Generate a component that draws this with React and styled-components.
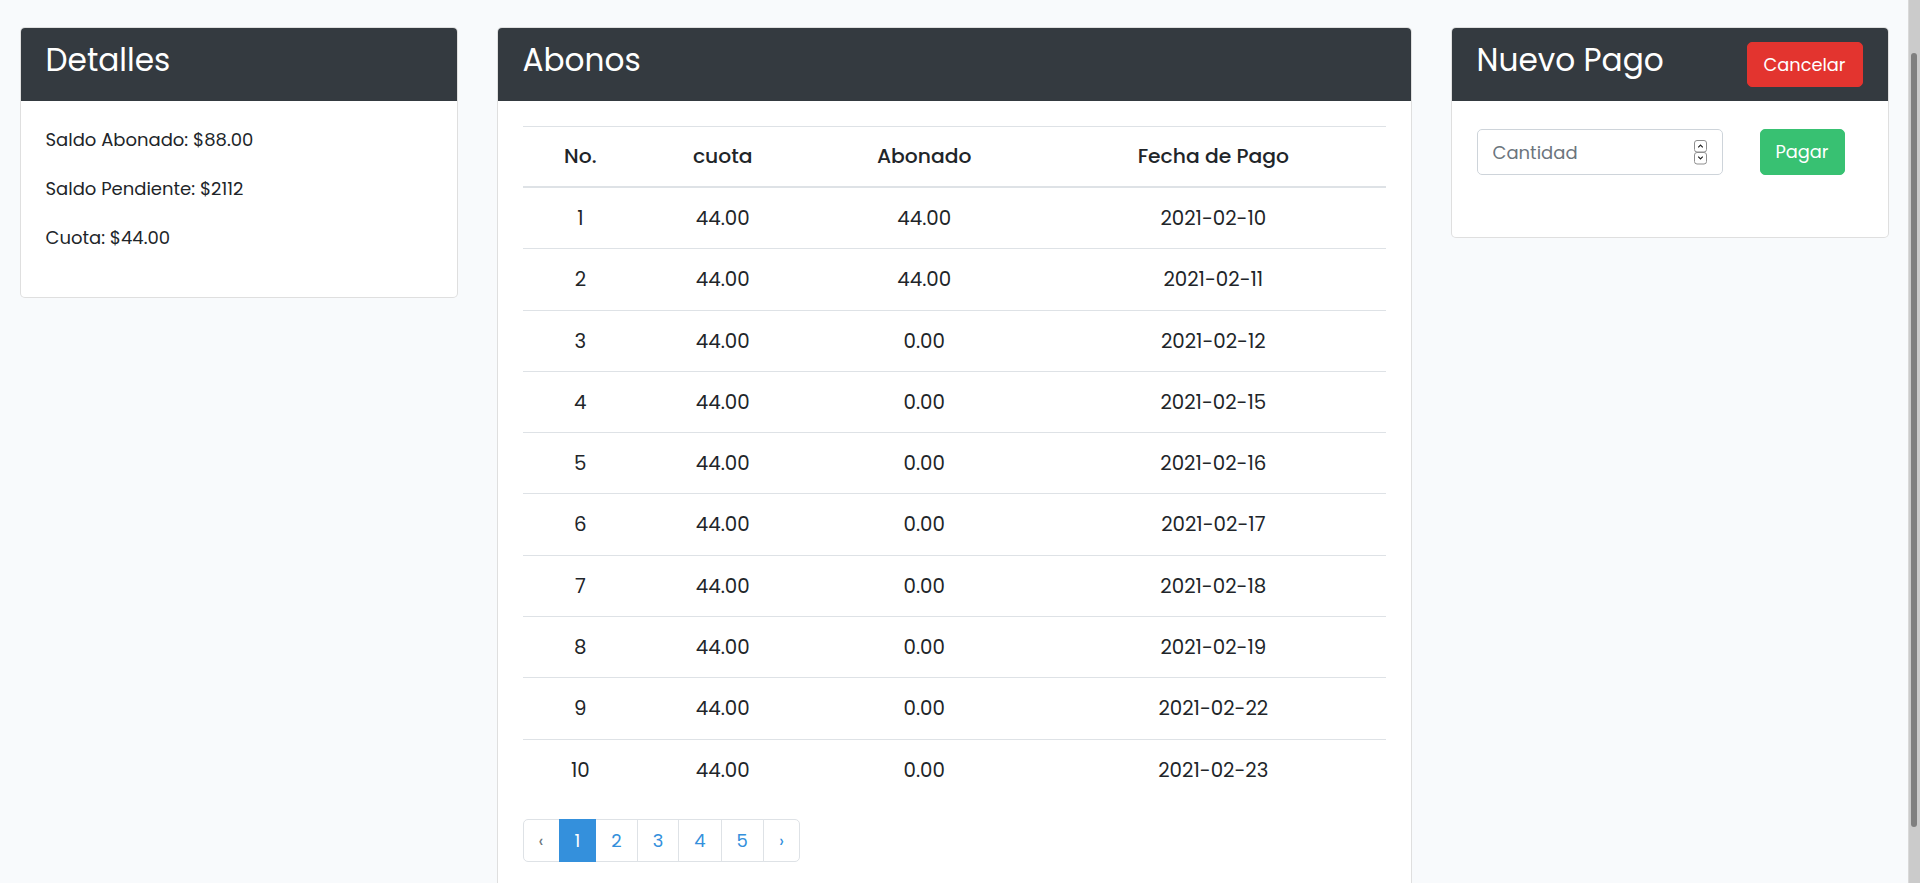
import React from 'react';
import styled, { createGlobalStyle } from 'styled-components';

const GlobalStyle = createGlobalStyle`
  html, body {
    margin: 0;
    background: #f8fafc;
  }
  body {
    font-family: "Poppins", "Open Sans", sans-serif;
    font-size: 18px;
    line-height: 1.6;
    color: #212529;
  }
`;

const Page = styled.main`
  padding: 27px 12px 120px 0;
`;

// the window's scrollbar, as it shows in the capture
const ScrollTrack = styled.div`
  position: fixed;
  top: 0;
  right: 0;
  width: 12px;
  height: 100vh;
  background: #cbcbcb;
  border-left: 1px solid #d9d9d9;
  box-sizing: border-box;
`;

const ScrollThumb = styled.div`
  margin: 53px 0 0 2px;
  width: 6px;
  height: 774px;
  border-radius: 3px;
  background: #808080;
`;

const Row = styled.div`
  display: flex;
  align-items: flex-start;
`;

const Col = styled.div`
  flex: 0 0 ${(p) => p.$span}%;
  max-width: ${(p) => p.$span}%;
  padding: 0 19.5px;
  box-sizing: border-box;
`;

const Card = styled.div`
  background: #fff;
  border: 1px solid rgba(0, 0, 0, 0.125);
  border-radius: 5px;
  overflow: hidden;
`;

const CardHeader = styled.div`
  display: flex;
  justify-content: space-between;
  align-items: flex-start;
  box-sizing: border-box;
  height: 73px;
  background: #343a40;
  color: #fff;
  padding: 14px 25px 0;
`;

const Title = styled.h3`
  margin: 0;
  font-size: 31.2px;
  font-weight: 400;
  line-height: 37.4px;
`;

const CardBody = styled.div`
  padding: 25px;
`;

const Line = styled.p`
  margin: 0 0 20px;
  font-size: 18px;
  line-height: 28.8px;
`;

const Button = styled.button`
  font-family: inherit;
  font-size: 17.8px;
  line-height: 1;
  height: ${(p) => p.$h || 45}px;
  padding: 0 ${(p) => p.$px || 16}px;
  border: 1px solid ${(p) => p.$bg};
  border-radius: 5px;
  background: ${(p) => p.$bg};
  color: #fff;
  cursor: pointer;
`;

const Table = styled.table`
  width: 100%;
  border-collapse: collapse;
  margin-bottom: 19px;
  color: #212529;
`;

const Th = styled.th`
  width: ${(p) => p.$w}%;
  font-weight: 500;
  font-size: 20.3px;
  line-height: 29px;
  padding: 15px;
  text-align: center;
  border-top: 1px solid #dee2e6;
  border-bottom: 2px solid #dee2e6;
`;

const Td = styled.td`
  font-size: 19.8px;
  line-height: 30.3px;
  padding: 15px;
  text-align: center;
  border-top: 1px solid #dee2e6;
`;

const Pager = styled.ul`
  display: flex;
  list-style: none;
  margin: 0;
  padding: 0;
`;

const PageItem = styled.li`
  margin-left: -1px;
  &:first-child {
    margin-left: 0;
  }
  &:first-child a {
    border-radius: 5px 0 0 5px;
  }
  &:last-child a {
    border-radius: 0 5px 5px 0;
  }
`;

const PageLink = styled.a`
  display: block;
  position: relative;
  font-size: 18px;
  line-height: 21px;
  padding: 10px 15px;
  border: 1px solid ${(p) => (p.$active ? '#3490dc' : '#dee2e6')};
  background: ${(p) => (p.$active ? '#3490dc' : '#fff')};
  color: ${(p) => (p.$active ? '#fff' : p.$disabled ? '#6c757d' : '#3490dc')};
  z-index: ${(p) => (p.$active ? 1 : 0)};
  text-decoration: none;
  cursor: pointer;
`;

const PayForm = styled.form`
  display: flex;
  align-items: flex-start;
  gap: 37px;
  margin: 3px 0 37px;
`;

const InputWrap = styled.div`
  position: relative;
  width: 246px;
`;

const Input = styled.input`
  box-sizing: border-box;
  width: 100%;
  height: 46px;
  padding: 0 40px 0 15px;
  font-family: inherit;
  font-size: 18px;
  color: #495057;
  background: #fff;
  border: 1px solid #ced4da;
  border-radius: 5px;
  outline: none;
  &::placeholder {
    color: #6c757d;
  }
`;

const Spinner = styled.svg`
  position: absolute;
  right: 16px;
  top: 11px;
`;

const rows = [
  [1, '44.00', '44.00', '2021-02-10'],
  [2, '44.00', '44.00', '2021-02-11'],
  [3, '44.00', '0.00', '2021-02-12'],
  [4, '44.00', '0.00', '2021-02-15'],
  [5, '44.00', '0.00', '2021-02-16'],
  [6, '44.00', '0.00', '2021-02-17'],
  [7, '44.00', '0.00', '2021-02-18'],
  [8, '44.00', '0.00', '2021-02-19'],
  [9, '44.00', '0.00', '2021-02-22'],
  [10, '44.00', '0.00', '2021-02-23'],
];

const columns = [
  ['No.', 13.4],
  ['cuota', 19.6],
  ['Abonado', 27.1],
  ['Fecha de Pago', 39.9],
];

const SpinIcon = () => (
  <Spinner width="13" height="25" viewBox="0 0 13 25" fill="none">
    <rect x="0.5" y="0.5" width="12" height="11.5" rx="2.5" stroke="#8f8f8f" fill="#fff" />
    <rect x="0.5" y="12.5" width="12" height="11.5" rx="2.5" stroke="#8f8f8f" fill="#fff" />
    <path d="M4.2 7.4 L6.5 5 L8.8 7.4" stroke="#222" strokeWidth="1.2" />
    <path d="M4.2 16.6 L6.5 19 L8.8 16.6" stroke="#222" strokeWidth="1.2" />
  </Spinner>
);

export default function App() {
  return (
    <>
      <GlobalStyle />
      <Page>
        <Row>
          <Col $span={25}>
            <Card>
              <CardHeader>
                <Title>Detalles</Title>
              </CardHeader>
              <CardBody>
                <Line>Saldo Abonado: $88.00</Line>
                <Line>Saldo Pendiente: $2112</Line>
                <Line>Cuota: $44.00</Line>
              </CardBody>
            </Card>
          </Col>
          <Col $span={50}>
            <Card>
              <CardHeader>
                <Title>Abonos</Title>
              </CardHeader>
              <CardBody>
                <Table>
                  <thead>
                    <tr>
                      {columns.map(([label, w]) => (
                        <Th key={label} $w={w}>
                          {label}
                        </Th>
                      ))}
                    </tr>
                  </thead>
                  <tbody>
                    {rows.map(([no, cuota, abonado, fecha]) => (
                      <tr key={no}>
                        <Td>{no}</Td>
                        <Td>{cuota}</Td>
                        <Td>{abonado}</Td>
                        <Td>{fecha}</Td>
                      </tr>
                    ))}
                  </tbody>
                </Table>
                <Pager>
                  <PageItem>
                    <PageLink $disabled>‹</PageLink>
                  </PageItem>
                  {[1, 2, 3, 4, 5].map((n) => (
                    <PageItem key={n}>
                      <PageLink $active={n === 1}>{n}</PageLink>
                    </PageItem>
                  ))}
                  <PageItem>
                    <PageLink>›</PageLink>
                  </PageItem>
                </Pager>
              </CardBody>
            </Card>
          </Col>
          <Col $span={25}>
            <Card>
              <CardHeader>
                <Title>Nuevo Pago</Title>
                <Button type="button" $bg="#e3342f">
                  Cancelar
                </Button>
              </CardHeader>
              <CardBody>
                <PayForm onSubmit={(e) => e.preventDefault()}>
                  <InputWrap>
                    <Input type="text" placeholder="Cantidad" />
                    <SpinIcon />
                  </InputWrap>
                  <Button type="submit" $bg="#38c172" $h={46} $px={15}>
                    Pagar
                  </Button>
                </PayForm>
              </CardBody>
            </Card>
          </Col>
        </Row>
      </Page>
      <ScrollTrack>
        <ScrollThumb />
      </ScrollTrack>
    </>
  );
}
